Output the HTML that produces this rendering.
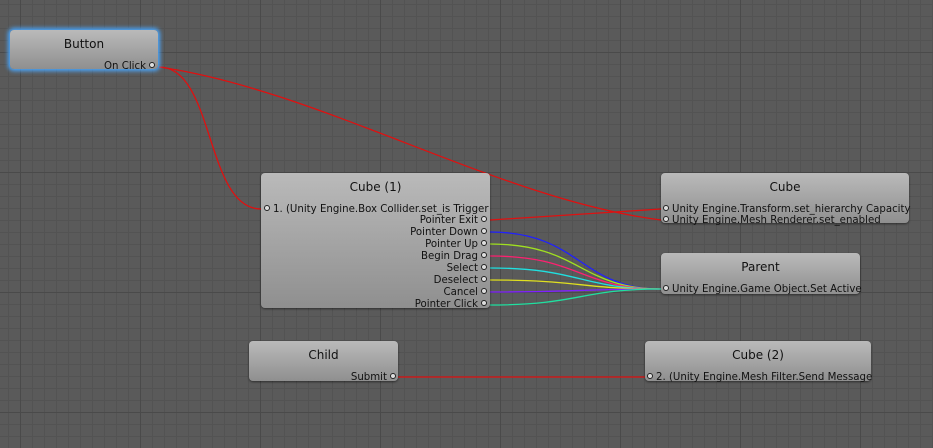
<!DOCTYPE html>
<html><head><meta charset="utf-8"><style>
html,body{margin:0;padding:0}
body{width:933px;height:448px;overflow:hidden;position:relative;background-color:#5a5a5a;
background-image:
linear-gradient(to right,#4a4a4a 1px,transparent 1px),
linear-gradient(to bottom,#4a4a4a 1px,transparent 1px),
linear-gradient(to right,#535353 1px,transparent 1px),
linear-gradient(to bottom,#535353 1px,transparent 1px);
background-size:120px 120px,120px 120px,12px 12px,12px 12px;
background-position:20px 52px,20px 52px,8px 4px,8px 4px;
font-family:"DejaVu Sans","Liberation Sans",sans-serif;}
.n{position:absolute;border-radius:4px;background:linear-gradient(#bababa,#8f8f8f);box-shadow:0 1px 2px rgba(0,0,0,.5);color:#111;}
.t{position:absolute;left:0;right:0;text-align:center;font-size:12px;top:7px}
.p{position:absolute;font-size:10.2px;white-space:nowrap;line-height:12px}
.r{text-align:right;right:1px}
.l{left:2px}
.c{display:inline-block;width:4px;height:4px;border:1px solid #222;border-radius:50%;background:#ddd;vertical-align:middle;margin:0 2px 0 3px;position:relative;top:-1px}
.l .c{margin:0 3px 0 2px}
svg{position:absolute;left:0;top:0}
</style></head><body>
<svg width="933" height="448" fill="none" stroke-width="1.3">
<path d="M159,67 C215,67 205,209 261,209" stroke="#e01010"/>
<path d="M159,67 C320,90 500,200 661,220" stroke="#e01010"/>
<path d="M490,220 L661,209" stroke="#e01010"/>
<path d="M490,232 C580,232 580,289 661,289" stroke="#2020ff"/>
<path d="M490,244 C580,244 580,289 661,289" stroke="#a0e020"/>
<path d="M490,256 C580,256 580,289 661,289" stroke="#ff2070"/>
<path d="M490,268 C580,268 580,289 661,289" stroke="#20e0e0"/>
<path d="M490,280 C580,280 580,289 661,289" stroke="#e0e020"/>
<path d="M490,292 C580,292 580,289 661,289" stroke="#8020ff"/>
<path d="M490,305 C580,305 580,289 661,289" stroke="#20e0a0"/>
<path d="M398,377 L645,377" stroke="#e01010"/>
</svg>
<div class="n" style="left:10px;top:30px;width:148px;height:39px;box-shadow:0 0 4px 2px #4aa8ff">
<div class="t">Button</div><div class="p r" style="top:31px">On Click<span class="c"></span></div></div>
<div class="n" style="left:261px;top:173px;width:229px;height:135px">
<div class="t">Cube (1)</div>
<div class="p l" style="top:31px;left:1px"><span class="c"></span>1. (Unity Engine.Box Collider.set_is Trigger</div>
<div class="p r" style="top:42px">Pointer Exit<span class="c"></span></div>
<div class="p r" style="top:54px">Pointer Down<span class="c"></span></div>
<div class="p r" style="top:66px">Pointer Up<span class="c"></span></div>
<div class="p r" style="top:78px">Begin Drag<span class="c"></span></div>
<div class="p r" style="top:90px">Select<span class="c"></span></div>
<div class="p r" style="top:102px">Deselect<span class="c"></span></div>
<div class="p r" style="top:114px">Cancel<span class="c"></span></div>
<div class="p r" style="top:126px">Pointer Click<span class="c"></span></div>
</div>
<div class="n" style="left:661px;top:173px;width:248px;height:50px">
<div class="t">Cube</div>
<div class="p l" style="top:31px;left:0"><span class="c"></span>Unity Engine.Transform.set_hierarchy Capacity</div>
<div class="p l" style="top:42px;left:0"><span class="c"></span>Unity Engine.Mesh Renderer.set_enabled</div>
</div>
<div class="n" style="left:661px;top:253px;width:199px;height:41px">
<div class="t">Parent</div>
<div class="p l" style="top:31px;left:0"><span class="c"></span>Unity Engine.Game Object.Set Active</div>
</div>
<div class="n" style="left:249px;top:341px;width:149px;height:40px">
<div class="t">Child</div><div class="p r" style="top:31px;right:0">Submit<span class="c"></span></div></div>
<div class="n" style="left:645px;top:341px;width:226px;height:40px">
<div class="t">Cube (2)</div>
<div class="p l" style="top:31px;left:0"><span class="c"></span>2. (Unity Engine.Mesh Filter.Send Message</div></div>
</body></html>
